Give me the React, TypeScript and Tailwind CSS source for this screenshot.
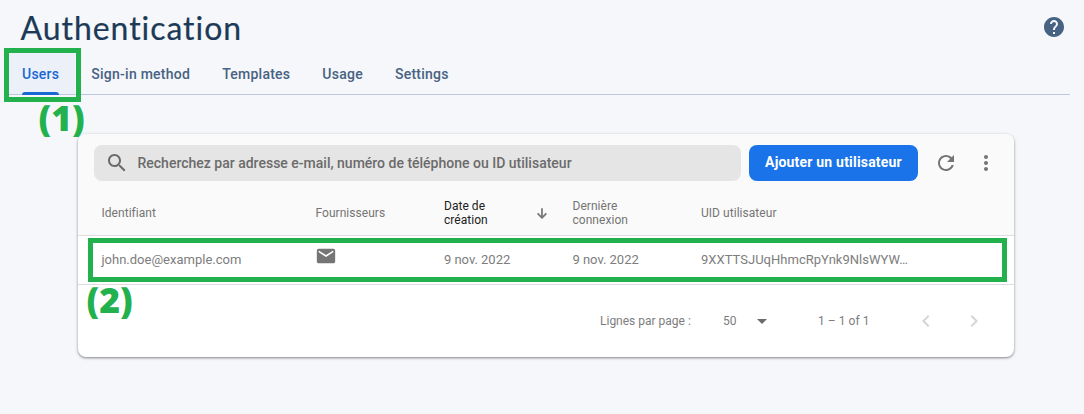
import React from "react";

const tabs = [
  { label: "Users", active: true },
  { label: "Sign-in method" },
  { label: "Templates" },
  { label: "Usage" },
  { label: "Settings" },
];

function Icon({ d, className }: { d: string; className: string }) {
  return (
    <svg viewBox="0 0 24 24" fill="currentColor" className={`shrink-0 ${className}`}>
      <path d={d} />
    </svg>
  );
}

const icons = {
  help: "M12 2C6.48 2 2 6.48 2 12s4.48 10 10 10 10-4.48 10-10S17.52 2 12 2zm1 17h-2v-2h2v2zm2.07-7.75l-.9.92C13.45 12.9 13 13.5 13 15h-2v-.5c0-1.1.45-2.1 1.17-2.83l1.24-1.26c.37-.36.59-.86.59-1.41 0-1.1-.9-2-2-2s-2 .9-2 2H8c0-2.21 1.79-4 4-4s4 1.79 4 4c0 .88-.36 1.68-.93 2.25z",
  search: "M15.5 14h-.79l-.28-.27C15.41 12.59 16 11.11 16 9.5 16 5.91 13.09 3 9.5 3S3 5.91 3 9.5 5.91 16 9.5 16c1.61 0 3.09-.59 4.23-1.57l.27.28v.79l5 4.99L20.49 19l-4.99-5zm-6 0C7.01 14 5 11.99 5 9.5S7.01 5 9.5 5 14 7.01 14 9.5 11.99 14 9.5 14z",
  refresh: "M17.65 6.35C16.2 4.9 14.21 4 12 4c-4.42 0-7.99 3.58-7.99 8s3.57 8 7.99 8c3.73 0 6.84-2.55 7.73-6h-2.08c-.82 2.33-3.04 4-5.65 4-3.31 0-6-2.69-6-6s2.69-6 6-6c1.66 0 3.14.69 4.22 1.78L13 11h7V4l-2.35 2.35z",
  more: "M12 8c1.1 0 2-.9 2-2s-.9-2-2-2-2 .9-2 2 .9 2 2 2zm0 2c-1.1 0-2 .9-2 2s.9 2 2 2 2-.9 2-2-.9-2-2-2zm0 6c-1.1 0-2 .9-2 2s.9 2 2 2 2-.9 2-2-.9-2-2-2z",
  mail: "M20 4H4c-1.1 0-1.99.9-1.99 2L2 18c0 1.1.9 2 2 2h16c1.1 0 2-.9 2-2V6c0-1.1-.9-2-2-2zm0 4l-8 5-8-5V6l8 5 8-5v2z",
  down: "M19.5 12l-1.8-1.8L13.3 14.6V3.500h-2.6v11.100L6.3 10.200 4.500 12l7.500 7.500z",
  left: "M15.41 7.41L14 6l-6 6 6 6 1.41-1.41L10.83 12z",
  right: "M10 6L8.59 7.41 13.17 12l-4.58 4.59L10 18l6-6z",
};

const columns = "grid grid-cols-[214px_128.5px_128.5px_128.5px_1fr] pl-[23.5px]";

export default function App() {
  return (
    <div className="relative flex h-[414px] w-[1084px] flex-col overflow-hidden bg-[#f5f7fa] font-['Roboto',sans-serif]">
      <header className="mr-[14px] ml-[6px] flex h-[95px] flex-col border-b border-[#bcc8e0]">
        <div className="flex h-[53px] items-center justify-between pr-1 pl-[14.5px]">
          <h1 className="pt-[3px] font-['Lato',sans-serif] text-[32px] leading-[40px] tracking-[0.95px] text-[#1c3a57] [-webkit-text-stroke:0.2px_#1c3a57]">
            Authentication
          </h1>
          <Icon d={icons.help} className="mt-px h-6 w-6 text-[#476282]" />
        </div>
        <nav className="-mb-px flex h-[42px] text-[14px] font-medium tracking-[0.25px] text-[#476282]">
          {tabs.map((t) => (
            <div
              key={t.label}
              className={`flex h-[42px] flex-col px-4 ${t.active ? "bg-[linear-gradient(#ecf1f9_41px,#bcc8e0_41px)] text-[#1967d2]" : ""}`}
            >
              <span className="flex h-[39px] items-center whitespace-nowrap pt-[4px]">{t.label}</span>
              {t.active && <span className="h-[3px] rounded-t-[3px] bg-[#1967d2]" />}
            </div>
          ))}
        </nav>
      </header>

      <section className="mt-[39px] ml-[78px] flex h-[223px] w-[936px] flex-col overflow-hidden rounded-lg bg-white text-[#757575] shadow-[0_1px_2px_rgba(0,0,0,0.32),0_1px_3px_1px_rgba(0,0,0,0.12)]">
        <div className="h-[102px] border-b border-[#dedede] bg-[#fafafa] pt-[11px]">
          <div className="flex items-center pl-4">
            <div className="flex h-9 w-[647px] items-center rounded-lg bg-[#e5e5e5] pl-[11px] text-[14px] font-medium text-[#6b6b6b]">
              <Icon d={icons.search} className="mr-[8.500px] h-6 w-6" />
              Recherchez par adresse e-mail, numéro de téléphone ou ID utilisateur
            </div>
            <button className="ml-2 h-9 w-[169px] rounded-lg bg-[#1a73e8] pb-0.5 text-[14px] font-bold tracking-[0.2px] whitespace-nowrap text-white">
              Ajouter un utilisateur
            </button>
            <Icon d={icons.refresh} className="ml-[15.5px] h-6 w-6" />
            <Icon d={icons.more} className="ml-[16px] h-6 w-6" />
          </div>
          <div className={`${columns} h-[54px] items-center pt-[9px] text-[12px] leading-[14px] tracking-[0.04px]`}>
            <span>Identifiant</span>
            <span>Fournisseurs</span>
            <span className="flex items-center justify-between pr-[22.5px] text-[#212121]">
              <span>
                Date de
                <br />
                création
              </span>
              <Icon d={icons.down} className="mt-[2px] h-4 w-4 text-[#757575]" />
            </span>
            <span>
              Dernière
              <br />
              connexion
            </span>
            <span>UID utilisateur</span>
          </div>
        </div>
        <div className={`${columns} h-[49px] items-center border-b border-[#dedede] text-[13px] text-[#7d7d7d]`}>
          <span>john.doe@example.com</span>
          <Icon d={icons.mail} className="-ml-px mb-[8px] h-[22px] w-[22px] text-[#757575]" />
          <span className="tracking-[-0.03px]">9 nov. 2022</span>
          <span className="tracking-[-0.03px]">9 nov. 2022</span>
          <span className="tracking-[0.02px]">9XXTTSJUqHhmcRpYnk9NlsWYW…</span>
        </div>
        <div className="flex h-[72px] items-center pl-[522px] text-[12px] text-[#7d7d7d]">
          <span className="w-[123px]">Lignes par page :</span>
          <span className="w-[34px]">50</span>
          <svg viewBox="0 0 10 5" fill="currentColor" className="h-[5px] w-[10px] text-[#6b6b6b]">
            <path d="M0 0h10L5 5z" />
          </svg>
          <span className="ml-[51px] w-[96px] tracking-[0.05px]">1 – 1 of 1</span>
          <Icon d={icons.left} className="h-6 w-6 text-[#d5d5d5]" />
          <Icon d={icons.right} className="ml-6 h-6 w-6 text-[#d5d5d5]" />
        </div>
      </section>

      <div className="absolute top-[48px] left-[4px] h-[54px] w-[77px] border-[5px] border-[#22b14c]" />
      <div className="absolute top-[238px] left-[88px] h-[44px] w-[919px] border-[5px] border-[#22b14c]" />
      <span className="absolute top-[97px] left-[38.5px] font-['Open_Sans',sans-serif] text-[35.5px] leading-[40px] font-extrabold text-[#22b14c]">
        (1)
      </span>
      <span className="absolute top-[279px] left-[86.5px] font-['Open_Sans',sans-serif] text-[35.5px] leading-[40px] font-extrabold text-[#22b14c]">
        (2)
      </span>
    </div>
  );
}
